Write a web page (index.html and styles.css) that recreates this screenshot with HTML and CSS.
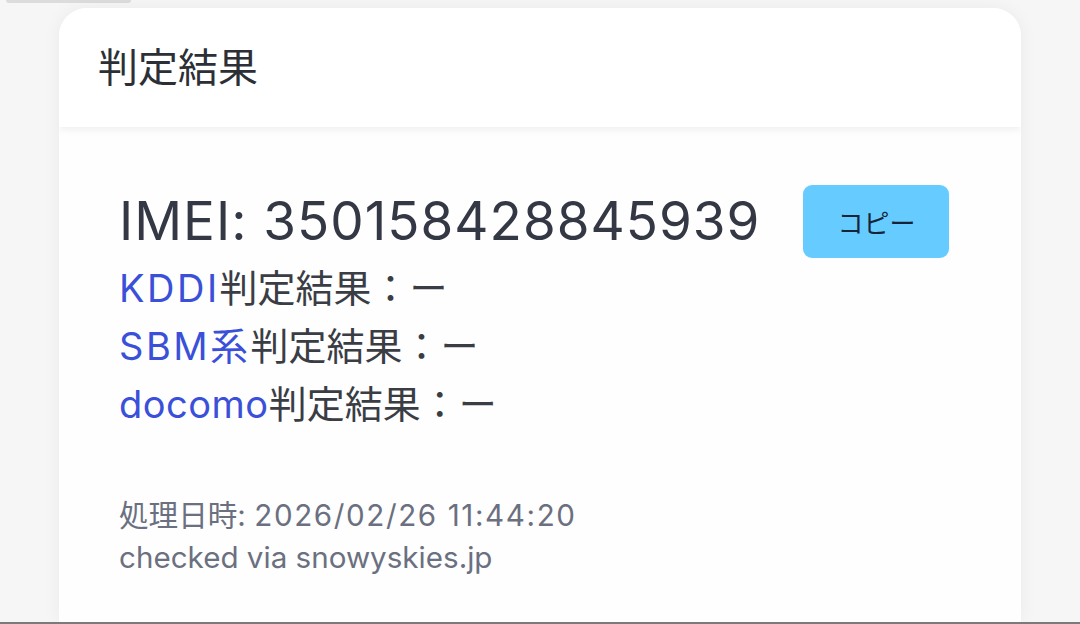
FILE: index.html
```html
<!DOCTYPE html>
<html lang="ja">
<head>
<meta charset="utf-8">
<title>判定結果</title>
<link rel="stylesheet" href="styles.css">
</head>
<body>
<div class="top-sliver"></div>
<div class="card">
  <div class="card-header">判定結果</div>
  <div class="card-body">
    <div class="imei-row">
      <div class="imei">IMEI: 350158428845939</div>
      <button class="copy-btn">コピー</button>
    </div>
    <div class="results">
      <div class="result"><span class="carrier wide">KDDI</span>判定結果：ー</div>
      <div class="result"><span class="carrier wide">SBM系</span>判定結果：ー</div>
      <div class="result"><span class="carrier">docomo</span>判定結果：ー</div>
    </div>
    <div class="meta">
      <div>処理日時: <span class="date">2026/02/26 11:44:20</span></div>
      <div>checked via snowyskies.jp</div>
    </div>
  </div>
</div>
<div class="bottom-line"></div>
</body>
</html>
```
FILE: styles.css
```css
html, body {
  margin: 0;
  padding: 0;
}
body {
  width: 1080px;
  height: 624px;
  overflow: hidden;
  background: #f6f6f6;
  font-family: Inter, "Noto Sans CJK JP", sans-serif;
  color: #333844;
  display: flex;
  flex-direction: column;
}
.top-sliver {
  width: 125px;
  height: 3px;
  margin-left: 6px;
  background: #dcdcdc;
  border-radius: 0 0 10px 10px;
  flex: none;
}
.card {
  margin: 5px 0 0 59px;
  width: 962px;
  flex: 1;
  background: #ffffff;
  border-radius: 28px 28px 0 0;
  box-shadow: 0 0 18px rgba(0,0,0,0.05);
  overflow: hidden;
  display: flex;
  flex-direction: column;
}
.card-header {
  height: 119px;
  box-sizing: border-box;
  padding-left: 39px;
  padding-bottom: 6px;
  display: flex;
  align-items: center;
  font-size: 40px;
  font-family: "Noto Sans CJK JP", sans-serif;
  color: #2c2f36;
  background: #fff;
  box-shadow: 0 2px 8px rgba(0,0,0,0.07);
  position: relative;
  z-index: 1;
}
.card-body {
  flex: 1;
  background: #fefefe;
  padding: 56px 60px 0 60px;
}
.imei-row {
  display: flex;
  align-items: center;
  gap: 43px;
}
.imei {
  font-size: 53px;
  color: #333844;
  letter-spacing: 1px;
}
.copy-btn {
  width: 146px;
  height: 73px;
  border: none;
  border-radius: 9px;
  background: #66ccff;
  color: #16243a;
  font-family: "Noto Sans CJK JP", sans-serif;
  font-size: 26px;
  padding: 0;
  margin-top: 2px;
}
.results {
  margin-top: 1px;
}
.result {
  font-size: 38px;
  line-height: 58px;
  color: #3a3d44;
}
.carrier {
  color: #3a50d9;
  letter-spacing: 0.5px;
}
.carrier.wide {
  letter-spacing: 2.5px;
}
.meta {
  margin-top: 61px;
  font-size: 29.6px;
  line-height: 42px;
  color: #6b7080;
}
.date {
  letter-spacing: 1.6px;
}
.bottom-line {
  height: 2px;
  background: #7a7a7a;
  flex: none;
}
```
